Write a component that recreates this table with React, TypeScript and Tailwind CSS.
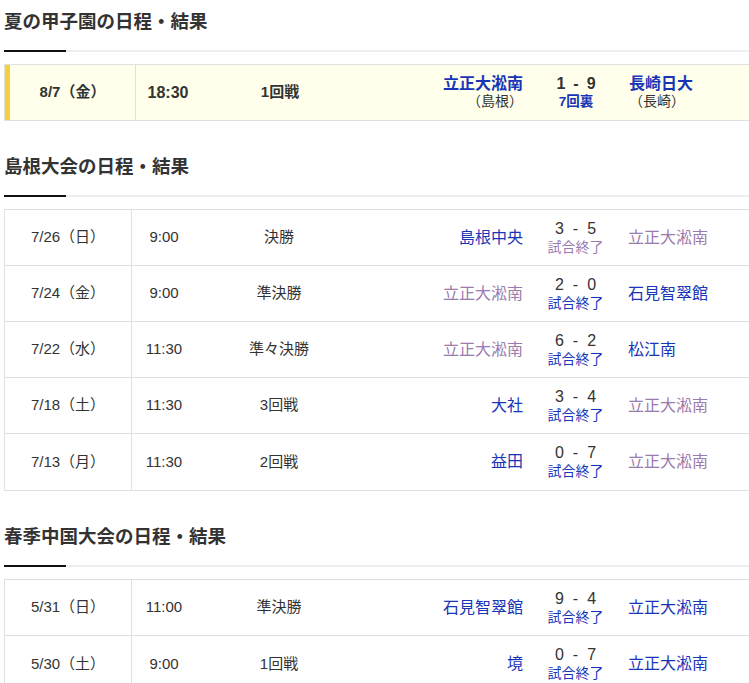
import React from "react";

type Game = {
  date: string;
  time: string;
  round: string;
  home: string;
  homeVisited?: boolean;
  score: [string, string];
  statusVisited?: boolean;
  away: string;
  awayVisited?: boolean;
};

const shimane: Game[] = [
  { date: "7/26（日）", time: "9:00", round: "決勝", home: "島根中央", score: ["3", "5"], statusVisited: true, away: "立正大淞南", awayVisited: true },
  { date: "7/24（金）", time: "9:00", round: "準決勝", home: "立正大淞南", homeVisited: true, score: ["2", "0"], away: "石見智翠館" },
  { date: "7/22（水）", time: "11:30", round: "準々決勝", home: "立正大淞南", homeVisited: true, score: ["6", "2"], away: "松江南" },
  { date: "7/18（土）", time: "11:30", round: "3回戦", home: "大社", score: ["3", "4"], away: "立正大淞南", awayVisited: true },
  { date: "7/13（月）", time: "11:30", round: "2回戦", home: "益田", score: ["0", "7"], away: "立正大淞南", awayVisited: true },
];

const chugoku: Game[] = [
  { date: "5/31（日）", time: "11:00", round: "準決勝", home: "石見智翠館", score: ["9", "4"], away: "立正大淞南" },
  { date: "5/30（土）", time: "9:00", round: "1回戦", home: "境", score: ["0", "7"], away: "立正大淞南" },
];

const blue = "text-[#1835b8]";
const purple = "text-[#9a7bae]";

function Heading({ title, className = "" }: { title: string; className?: string }) {
  return (
    <div className={className}>
      <h2 className="pl-[4px] text-[18.5px] font-bold leading-[26px] text-[#333]">{title}</h2>
      <div className="mt-[15px] flex h-[2px]">
        <div className="ml-[4px] w-[62px] bg-[#111]" />
        <div className="flex-1 bg-[#eee]" />
      </div>
    </div>
  );
}

function Score({ a, b, bold }: { a: string; b: string; bold?: boolean }) {
  return (
    <span
      className={`flex text-[16px] leading-[18px] text-[#333] ${bold ? "gap-[8px] font-bold" : "gap-[9px]"}`}
    >
      <span>{a}</span>
      <span>-</span>
      <span>{b}</span>
    </span>
  );
}

function GameRow({ g }: { g: Game }) {
  return (
    <div className="flex h-[56px] items-center border-b border-[#e0e0e0] text-[15px] text-[#333] last:border-b-0">
      <div className="flex h-full w-[127px] items-center justify-center border-r border-[#e0e0e0]">
        {g.date}
      </div>
      <div className="w-[64px] text-center">{g.time}</div>
      <div className="w-[166px] text-center">{g.round}</div>
      <div className={`w-[169px] pr-[8px] text-right text-[16px] ${g.homeVisited ? purple : blue}`}>
        {g.home}
      </div>
      <div className="flex w-[89px] flex-col items-center">
        <Score a={g.score[0]} b={g.score[1]} />
        <span className={`text-[14px] leading-[18px] ${g.statusVisited ? purple : blue}`}>
          試合終了
        </span>
      </div>
      <div className={`flex-1 pl-[8px] text-[16px] ${g.awayVisited ? purple : blue}`}>{g.away}</div>
    </div>
  );
}

function GameTable({ games }: { games: Game[] }) {
  return (
    <div className="ml-[4px] mt-[12px] border border-[#e0e0e0]">
      {games.map((g) => (
        <GameRow key={g.date} g={g} />
      ))}
    </div>
  );
}

export default function App() {
  return (
    <div
      className="w-full overflow-hidden bg-white"
      style={{ fontFamily: '"Liberation Sans", Arial, "Noto Sans CJK JP", sans-serif' }}
    >
      <div className="w-[770px] pt-[9px]">
        <Heading title="夏の甲子園の日程・結果" />

        <div className="ml-[4px] mt-[12px] flex h-[57px] border border-[#e0e0e0] bg-[#ffffeb] text-[#333]">
          <div className="w-[5px] bg-[#f5cf3c]" />
          <div className="flex w-[126px] items-center justify-center border-r border-[#e0e0e0] text-[15px] font-bold">
            8/7（金）
          </div>
          <div className="flex w-[64px] items-center justify-center text-[16px] font-bold">18:30</div>
          <div className="flex w-[160px] items-center justify-center text-[15px] font-bold">1回戦</div>
          <div className="flex w-[171px] flex-col items-end justify-center pr-[8px]">
            <span className={`text-[16px] font-bold leading-[18px] ${blue}`}>立正大淞南</span>
            <span className="text-[14px] leading-[17px]">（島根）</span>
          </div>
          <div className="flex w-[90px] flex-col items-center justify-center">
            <Score a="1" b="9" bold />
            <span className={`text-[13.5px] font-bold leading-[17px] ${blue}`}>7回裏</span>
          </div>
          <div className="flex flex-1 flex-col justify-center pl-[8px]">
            <span className={`text-[16px] font-bold leading-[18px] ${blue}`}>長崎日大</span>
            <span className="text-[14px] leading-[17px]">（長崎）</span>
          </div>
        </div>

        <Heading title="島根大会の日程・結果" className="mt-[33px]" />
        <GameTable games={shimane} />

        <Heading title="春季中国大会の日程・結果" className="mt-[33px]" />
        <GameTable games={chugoku} />
      </div>
    </div>
  );
}
